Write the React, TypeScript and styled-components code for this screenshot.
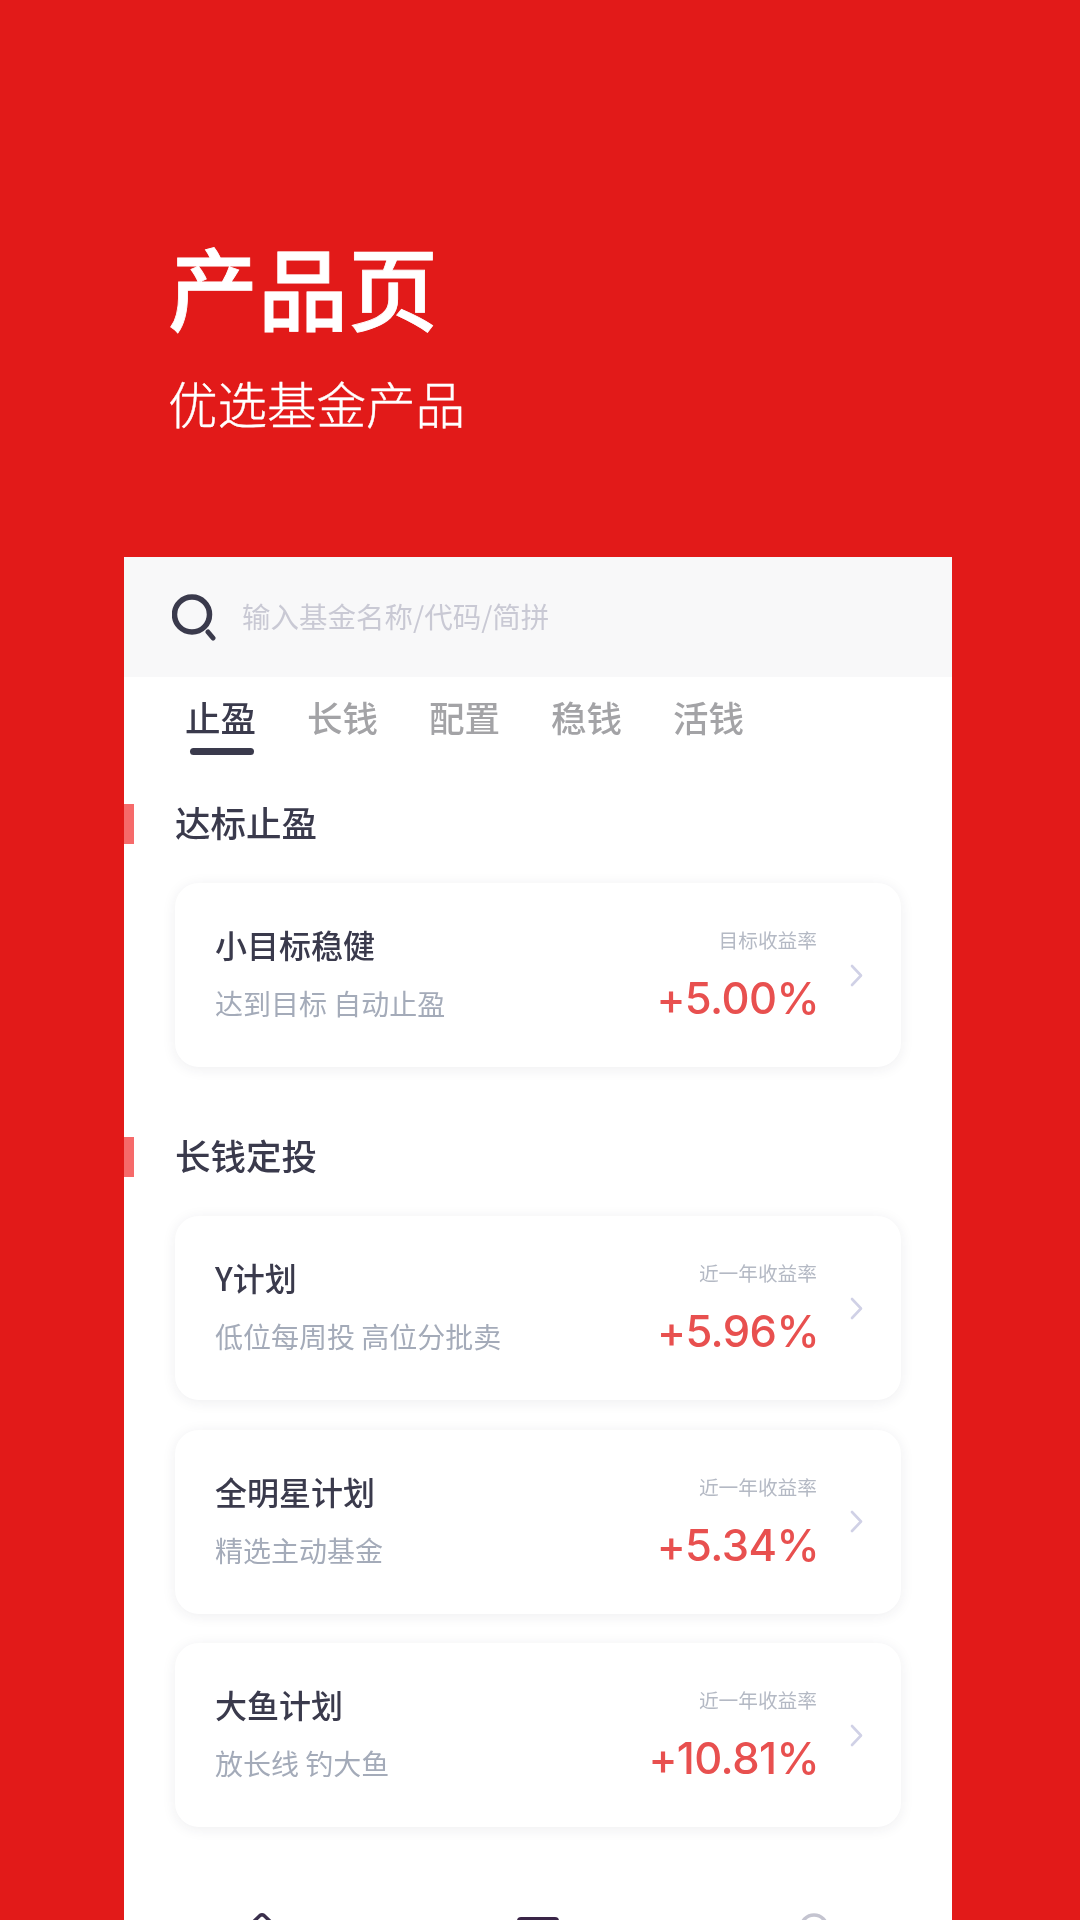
import React from "react";
import styled, { createGlobalStyle } from "styled-components";

const Global = createGlobalStyle`
  html, body { margin: 0; padding: 0; height: 1920px; overflow: hidden; background: #e21a19; }
  * { box-sizing: border-box; }
`;

const Page = styled.div`
  width: 1080px;
  height: 1920px;
  overflow: hidden;
  background: #e21a19;
  font-family: "Noto Sans CJK SC", "Liberation Sans", sans-serif;
  display: flex;
  flex-direction: column;
`;

const Hero = styled.header`
  height: 557px;
  padding: 229px 0 0 168px;
  color: #fff;
`;

const Title = styled.h1`
  margin: 0;
  font-size: 90px;
  line-height: 112px;
  font-weight: 500;
  -webkit-text-stroke: 0.8px #fff;
`;

const Subtitle = styled.p`
  margin: 27px 0 0;
  font-size: 49.5px;
  line-height: 70px;
  font-weight: 300;
  -webkit-text-stroke: 0.4px #fff;
`;

const Panel = styled.main`
  margin-left: 124px;
  width: 828px;
  flex: 1;
  min-height: 0;
  background: #fff;
  overflow: hidden;
  filter: blur(0.7px);
`;

const SearchBar = styled.div`
  height: 120px;
  background: #f8f8f9;
  display: flex;
  align-items: center;
  padding-left: 48px;
  gap: 26px;
`;

const Placeholder = styled.span`
  font-size: 28.5px;
  line-height: 40px;
  margin-top: -2px;
  color: #c9c9d4;
`;

const Tabs = styled.nav`
  display: flex;
  gap: 50px;
  padding: 14px 0 0 61px;
  height: 102px;
`;

const Tab = styled.div<{ $active?: boolean }>`
  position: relative;
  width: 72px;
  font-size: 35.5px;
  line-height: 52px;
  font-weight: 500;
  white-space: nowrap;
  color: ${(p) => (p.$active ? "#3a3a4c" : "#a3a3a6")};
  ${(p) =>
    p.$active &&
    `&::after {
      content: "";
      position: absolute;
      left: 5px;
      top: 57px;
      width: 64px;
      height: 7px;
      border-radius: 4px;
      background: #3a3a4c;
    }`}
`;

const Section = styled.section<{ $gap: number }>`
  margin-top: ${(p) => p.$gap}px;
`;

const SectionTitle = styled.h2`
  position: relative;
  margin: 0;
  height: 40px;
  padding-left: 51px;
  font-size: 35.5px;
  line-height: 36px;
  font-weight: 500;
  color: #3a3a4c;
  &::before {
    content: "";
    position: absolute;
    left: 0;
    top: 0;
    width: 10px;
    height: 40px;
    background: #f66a6a;
  }
`;

const CardList = styled.div`
  margin: 39px 0 0 51px;
  width: 726px;
  display: flex;
  flex-direction: column;
  gap: 29.5px;
`;

const Card = styled.article`
  height: 184px;
  border-radius: 24px;
  background: #fff;
  box-shadow: 0 2px 14px rgba(40, 40, 60, 0.08);
  display: flex;
  align-items: stretch;
  padding: 0 38px 0 40px;
`;

const CardLeft = styled.div`
  flex: 1;
  padding-top: 38px;
`;

const CardName = styled.div`
  font-size: 32px;
  line-height: 46px;
  font-weight: 500;
  color: #3a3a4c;
`;

const CardDesc = styled.div`
  margin-top: 16px;
  font-size: 28px;
  line-height: 40px;
  color: #a4abb9;
  white-space: pre;
`;

const CardRight = styled.div`
  display: flex;
  flex-direction: column;
  align-items: flex-end;
  padding-top: 43px;
  margin-right: 33px;
`;

const RateLabel = styled.div`
  font-size: 19.7px;
  line-height: 28px;
  color: #b4b9c4;
`;

const RateValue = styled.div`
  margin: 17px -2px 0 0;
  font-family: Inter, "Liberation Sans", sans-serif;
  font-size: 43.5px;
  line-height: 54px;
  font-weight: 500;
  letter-spacing: -0.6px;
  color: #e8504f;
`;

const ChevronWrap = styled.div`
  display: flex;
  align-items: center;
  color: #d0d1e6;
`;

const BottomNav = styled.nav`
  margin-top: 85px;
  display: grid;
  grid-template-columns: repeat(3, 276px);
  justify-items: center;
`;

const NavSlot = styled.div<{ $offset?: number }>`
  display: flex;
  margin-top: ${(p) => p.$offset ?? 0}px;
`;

const Chevron = () => (
  <svg width="13" height="23" viewBox="0 0 13 23" fill="none" stroke="currentColor" strokeWidth="2.6" strokeLinecap="round" strokeLinejoin="round">
    <path d="M2 2l9 9.5-9 9.5" />
  </svg>
);

const SearchIcon = () => (
  <svg width="44" height="47" viewBox="0 0 44 47" fill="none" stroke="#3a3a4c">
    <ellipse cx="20" cy="20.5" rx="17.5" ry="17.5" strokeWidth="5.5" />
    <path d="M36 38l5 6" strokeWidth="5" strokeLinecap="round" />
  </svg>
);

const HomeIcon = () => (
  <svg width="36" height="30" viewBox="0 0 36 30" fill="none" stroke="#3a2f4c" strokeWidth="3.5">
    <path d="M3 16L16 3.5q2-1.5 4 0L33 16v14H3z" strokeLinejoin="round" />
  </svg>
);

const ProductIcon = () => (
  <svg width="42" height="30" viewBox="0 0 42 30">
    <rect x="0" y="0" width="42" height="30" rx="4" fill="#3a2547" />
  </svg>
);

const UserIcon = () => (
  <svg width="32" height="30" viewBox="0 0 32 30" fill="none" stroke="#c4c4d0" strokeWidth="3.5">
    <circle cx="16" cy="15" r="13" />
  </svg>
);

type Item = { name: string; desc: string; label: string; value: string };

const target: Item[] = [
  { name: "小目标稳健", desc: "达到目标 自动止盈", label: "目标收益率", value: "+5.00%" },
];

const longTerm: Item[] = [
  { name: "Y计划", desc: "低位每周投 高位分批卖", label: "近一年收益率", value: "+5.96%" },
  { name: "全明星计划", desc: "精选主动基金", label: "近一年收益率", value: "+5.34%" },
  { name: "大鱼计划", desc: "放长线 钓大鱼", label: "近一年收益率", value: "+10.81%" },
];

const ProductCard = ({ item }: { item: Item }) => (
  <Card>
    <CardLeft>
      <CardName>{item.name}</CardName>
      <CardDesc>{item.desc}</CardDesc>
    </CardLeft>
    <CardRight>
      <RateLabel>{item.label}</RateLabel>
      <RateValue>{item.value}</RateValue>
    </CardRight>
    <ChevronWrap>
      <Chevron />
    </ChevronWrap>
  </Card>
);

export default function App() {
  return (
    <Page>
      <Global />
      <Hero>
        <Title>产品页</Title>
        <Subtitle>优选基金产品</Subtitle>
      </Hero>
      <Panel>
        <SearchBar>
          <SearchIcon />
          <Placeholder>输入基金名称/代码/简拼</Placeholder>
        </SearchBar>
        <Tabs>
          <Tab $active>止盈</Tab>
          <Tab>长钱</Tab>
          <Tab>配置</Tab>
          <Tab>稳钱</Tab>
          <Tab>活钱</Tab>
        </Tabs>
        <Section $gap={25}>
          <SectionTitle>达标止盈</SectionTitle>
          <CardList>
            {target.map((i) => (
              <ProductCard key={i.name} item={i} />
            ))}
          </CardList>
        </Section>
        <Section $gap={70}>
          <SectionTitle>长钱定投</SectionTitle>
          <CardList>
            {longTerm.map((i) => (
              <ProductCard key={i.name} item={i} />
            ))}
          </CardList>
        </Section>
        <BottomNav>
          <NavSlot>
            <HomeIcon />
          </NavSlot>
          <NavSlot $offset={5}>
            <ProductIcon />
          </NavSlot>
          <NavSlot $offset={1}>
            <UserIcon />
          </NavSlot>
        </BottomNav>
      </Panel>
    </Page>
  );
}
